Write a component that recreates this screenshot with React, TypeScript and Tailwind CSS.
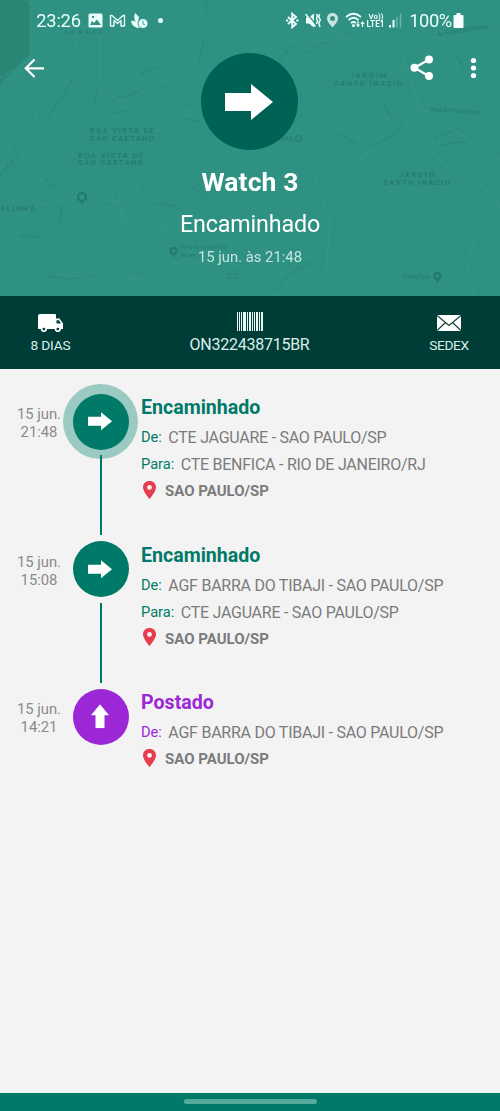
import React from 'react';

type Stop = {
  date: string;
  time: string;
  title: string;
  from: string;
  to?: string;
  kind: 'forwarded' | 'posted';
  current?: boolean;
};

const stops: Stop[] = [
  { date: '15 jun.', time: '21:48', title: 'Encaminhado', from: 'CTE JAGUARE - SAO PAULO/SP', to: 'CTE BENFICA - RIO DE JANEIRO/RJ', kind: 'forwarded', current: true },
  { date: '15 jun.', time: '15:08', title: 'Encaminhado', from: 'AGF BARRA DO TIBAJI - SAO PAULO/SP', to: 'CTE JAGUARE - SAO PAULO/SP', kind: 'forwarded' },
  { date: '15 jun.', time: '14:21', title: 'Postado', from: 'AGF BARRA DO TIBAJI - SAO PAULO/SP', kind: 'posted' },
];

function MapBackdrop() {
  return (
    <svg className="absolute inset-0" width="500" height="296" viewBox="0 0 500 296" fill="none" aria-hidden="true">
      <path d="M0 0H30V54L0 84Z" fill="#2a8575" />
      <g stroke="#3b998a" strokeWidth="1.2" opacity=".65">
        <path d="M0 78 28 61 75 50 76 15M30 0V62L37 82V118L10 145 0 172M100 35V80L130 98 158 80 200 88M76 55 102 95 165 110 200 112M140 0 160 22 205 31 250 20M250 38 310 42 400 35 500 28M409 38 404 62 420 108 500 160M360 130 423 105M430 150 455 176 482 185 500 206 475 234 467 270 475 296" />
        <path d="M0 225 38 205 80 196 120 202 165 225 150 250 127 280 160 276 200 245 250 235M60 150 95 165 118 190 124 236M85 245 130 230 175 225M250 153 300 165 360 162 378 140M0 255 70 276 140 278 180 296M315 175 330 220 326 275M340 250 372 225 398 180M400 220 460 238M70 120 110 132 160 130 205 152M25 0 60 22 95 28M300 0 330 30 380 60 405 70" />
        <path d="M0 190 60 210M50 230 105 270M105 185 100 270M112 196 150 265M90 205 140 212M90 222 145 222M350 110 370 200M390 210 410 260M430 195 440 240M365 243 410 247M210 0 218 50M60 85 100 80" strokeWidth=".8" />
      </g>
      <g stroke="#257f71" strokeWidth="1.5" strokeDasharray="4 1.5 2 1" opacity=".48">
        <path d="M47 118 62 98 72 78M140 74 158 67M118 97 133 95 146 86M94 104 98 87M110 113 130 111M184 119 202 122M199 64 204 39M280 60 291 47M307 53 325 41M384 104 392 120M371 147 390 137 404 123M335 133 357 143M434 138 462 127M440 145 468 141M0 176 20 152M45 179 58 190M60 226 62 206M20 235 46 238M46 276 70 279 96 275M140 189 149 179M154 203 170 205 180 209M188 183 206 198M274 290 290 274 314 260" />
        <path d="M206 14V0M456 54 464 69M227 270H238M227 274H238M227 278H238" />
      </g>
      <g fill="#216f63" className="font-['Roboto',sans-serif]" opacity=".6" fontWeight="600">
        <text x="65" y="33.500" fontSize="6" textLength="38">LORATO</text>
        <text x="90" y="133" fontSize="7.5" textLength="64">BOA VISTA DE</text>
        <text x="90" y="141" fontSize="7.5" textLength="64">SÃO CAETANO</text>
        <text x="78" y="157.500" fontSize="7.5" textLength="65">BOA VISTA DE</text>
        <text x="78" y="165" fontSize="7.5" textLength="65">SÃO CAETANO</text>
        <text x="350" y="78" fontSize="7.5" textLength="36">JARDIM</text>
        <text x="334" y="86" fontSize="7.5" textLength="68">SANTO INACIO</text>
        <text x="399" y="177" fontSize="7.5" textLength="36">JARDIM</text>
        <text x="383" y="185" fontSize="7.5" textLength="67">SANTO INACIO</text>
        <text x="1" y="211" fontSize="7.5" textLength="34">ELINHA</text>
      </g>
      <g fill="#216f63" className="font-['Roboto',sans-serif]" opacity=".5" fontWeight="500">
        <text x="437" y="36" fontSize="6.5" textLength="52" transform="rotate(-8 437 36)">Av. Raimundo Pereira</text>
        <text x="430" y="111" fontSize="6.5" textLength="50" transform="rotate(4 430 111)">Rua do Pano Bom</text>
        <text x="180" y="249" fontSize="5.5" textLength="47">Parque Industrial</text>
        <text x="180" y="257" fontSize="5" textLength="16">Tancredo</text>
        <text x="403" y="279" fontSize="6.5">Carrefour</text>
        <text x="281" y="141" fontSize="6.5">PAX</text>
      </g>
      <g stroke="#227467" strokeWidth="2" opacity=".85">
        <circle cx="82" cy="197" r="4" /><path d="M82 201V204" />
        <circle cx="173.500" cy="251" r="3" /><path d="M173.500 254V257" />
        <circle cx="437.500" cy="276" r="3" /><path d="M437.500 279V282" />
        <path d="M296 136H301V141H296Z" strokeWidth="1" />
      </g>
    </svg>
  );
}

function ArrowIcon({ className }: { className: string }) {
  return (
    <svg className={className} viewBox="0 0 48 36" fill="#fff">
      <path d="M0 9H26V0L48 18L26 36V27H0Z" />
    </svg>
  );
}

function StatusBar() {
  return (
    <div className="relative flex h-[41px] items-center text-white">
      <span className="ml-9 w-[45px] whitespace-nowrap text-[18.3px] leading-5 tracking-[-0.2px] text-[#e9fffb]">23:26</span>
      <svg className="ml-[7px]" width="80" height="20" viewBox="88 11 80 20">
        <path fillRule="evenodd" fill="#e9fffb" d="M90 13.500H101Q102.500 13.500 102.500 15V26Q102.500 27.500 101 27.500H90Q88.500 27.500 88.500 26V15Q88.500 13.500 90 13.500ZM90 25H101L97 19.500 94 23 92 21ZM92 16V18H94V16Z" />
        <path d="M110.500 26V15.500H112L117.500 20.500 123 15.500H124.500V26H121V20.500L117.500 23.500 114 20.500V26Z" fill="none" stroke="#e9fffb" strokeWidth="1.4" strokeLinejoin="round" />
        <path fill="#e9fffb" d="M135 13 139 17 138 22Q142 23 143 28Q132 29 131 21Q134 20 136 22Q133 18 135 13Z" />
        <circle cx="143" cy="23.500" r="5" fill="#e9fffb" stroke="#2e9182" />
        <path d="M143 20.500V24L145 25" fill="none" stroke="#3d9a8b" />
        <circle cx="160.500" cy="20.500" r="2.500" fill="#e9fffb" />
      </svg>
      <svg className="ml-auto" width="118" height="20" viewBox="285 11 118 20" fill="none">
        <path d="M288 17 296 24 292.200 27.200V13.800L296 17 288 24" stroke="#effffd" strokeWidth="1.900" />
        <path d="M286 20.500H288.300M296.300 20.500H298.500" stroke="#effffd" strokeWidth="2" />
        <path d="M306 17.500H309L314 13.500V27.500L309 23.500H306Z" fill="#effffd" />
        <path d="M306.500 13 316.500 25.500" stroke="#2e9182" strokeWidth="1.300" /><path d="M305.500 14 315.500 26.500" stroke="#effffd" strokeWidth="1.400" />
        <path d="M316.500 14 317.500 16 316.500 18.500 317.500 21 316.500 24M319.500 14 318.800 17 320.300 20 318.800 23 320 27" stroke="#effffd" strokeWidth="1.500" />
        <path fillRule="evenodd" fill="#c7e4df" d="M332.500 13C328.800 13 327 15.500 327 18.500C327 22 332.500 27.500 332.500 27.500C332.500 27.500 338 22 338 18.500C338 15.500 336.200 13 332.500 13ZM332.500 16A2.500 2.500 0 1 1 332.500 21A2.500 2.500 0 0 1 332.500 16Z" />
        <path d="M346 17Q353.500 10.500 361 17M348.500 20Q353.500 15.500 358.500 20M351 23Q353.500 21 356 23" stroke="#effffd" strokeWidth="1.700" />
        <circle cx="353.500" cy="25.500" r="1.500" fill="#effffd" />
        <path d="M358 21V26M356.500 24.500 358 26.500 359.500 24.500M362.500 27V22M361 24 362.500 22 364 24" stroke="#effffd" strokeWidth="1.200" />
        <g className="font-['Roboto',sans-serif]" fill="#effffd" fontWeight="700">
          <text x="368.500" y="19" fontSize="8" textLength="15" lengthAdjust="spacingAndGlyphs">Vo))</text>
          <text x="366.500" y="27.300" fontSize="8.500" textLength="18" lengthAdjust="spacingAndGlyphs">LTE1</text>
        </g>
        <path d="M390 25V27.500M393.500 20V27.500" stroke="#effffd" strokeWidth="2" />
        <path d="M396.800 17V27.500M400.500 13.500V27.500" stroke="#6db5aa" strokeWidth="1.500" />
      </svg>
      <span className="ml-[5px] w-[45px] whitespace-nowrap text-[18.3px] tracking-[-0.4px] text-[#e9fffb]">100%</span>
      <svg className="mr-[36px]" width="11" height="16" viewBox="0 0 10 16" fill="#f5fffd"><path d="M3 0H7V2H9Q10 2 10 3V14Q10 15 9 15H1Q0 15 0 14V3Q0 2 1 2H3Z" /></svg>
    </div>
  );
}

function Header() {
  return (
    <header className="relative h-[296px] bg-[#2e9182] text-center text-white">
      <MapBackdrop />
      <StatusBar />
      <div className="relative mt-3 flex h-[98px] items-start">
        <button className="ml-6 mt-[5px] w-[177px]" aria-label="Voltar">
          <svg width="22" height="22" viewBox="0 0 22 22" fill="none" stroke="#fff" strokeWidth="2.200"><path d="M20 10.300H2M10.500 1.500 1.800 10.300 10.500 19" /></svg>
        </button>
        <div className="flex size-[97px] items-center justify-center rounded-full bg-[#006254] pr-[2px] pt-[1px]">
          <ArrowIcon className="h-9 w-12" />
        </div>
        <button className="ml-[112px] mt-0.5" aria-label="Compartilhar">
          <svg width="24" height="26" viewBox="0 0 24 26" fill="#fff"><path d="M19 4.500 4.500 12.800 19 21.200" fill="none" stroke="#fff" strokeWidth="2.200" /><circle cx="19" cy="4.500" r="4" /><circle cx="4.500" cy="12.800" r="4" /><circle cx="19" cy="21" r="4" /></svg>
        </button>
        <button className="ml-[36px] mt-1" aria-label="Mais opções">
          <svg width="7" height="22" viewBox="0 0 6 22" fill="#fff"><circle cx="3" cy="3.500" r="2.600" /><circle cx="3" cy="11" r="2.600" /><circle cx="3" cy="18.500" r="2.600" /></svg>
        </button>
      </div>
      <h1 className="relative mt-[13px] text-[26.5px] font-bold leading-9 tracking-[0.1px]">Watch 3</h1>
      <p className="relative mt-[8px] text-[23.3px] leading-8 tracking-[-0.15px]">Encaminhado</p>
      <p className="relative mt-[5px] text-[14.8px] leading-6 text-[#c5e7e1]">15 jun. às 21:48</p>
    </header>
  );
}

function SummaryBar() {
  return (
    <section className="flex h-[73px] justify-between bg-[#003d36] text-[#d9eeeb]">
      <div className="flex w-[101px] flex-col items-center pt-[18px]">
        <svg width="25" height="19" viewBox="0 0 25 19"><path fillRule="evenodd" fill="#fff" d="M2 0H17Q18 0 18 1V4.500H21.500L25 9.500V15H23A3.200 3.200 0 0 1 16.700 15H9A3.200 3.200 0 0 1 2.700 15H0V2Q0 0 2 0ZM18.500 6.200V9.500H23L21 6.200ZM5.850 13.500A1.500 1.500 0 1 0 5.850 16.500A1.500 1.500 0 1 0 5.850 13.500ZM19.800 13.500A1.500 1.500 0 1 0 19.800 16.500A1.500 1.500 0 1 0 19.800 13.500Z" /><path d="M5.850 12.600A2.400 2.400 0 1 0 5.860 12.600M19.800 12.600A2.400 2.400 0 1 0 19.810 12.600" fill="none" stroke="#fff" strokeWidth="1.400" /></svg>
        <span className="mt-1 text-[13.700px] leading-4 tracking-[-0.2px]">8 DIAS</span>
      </div>
      <div className="flex w-[200px] flex-col items-center pt-4">
        <svg width="26" height="19" viewBox="0 0 26 19" fill="#e9f7f5"><path d="M0 0H1V19H0ZM2 0H3V19H2ZM4 0H5V19H4ZM6 0H9V19H6ZM10 0H11V19H10ZM12 0H14V19H12ZM15 0H16V19H15ZM17 0H18V19H17ZM19 0H21V19H19ZM22 0H23V19H22ZM24 0H26V19H24Z" /></svg>
        <span className="mt-1 text-[16px] leading-5 tracking-[-0.25px]">ON322438715BR</span>
      </div>
      <div className="flex w-[102px] flex-col items-center pt-[19px]">
        <svg width="24" height="16" viewBox="0 0 24 16"><path fill="#fff" d="M0 0H24V16H0Z" /><path d="M0 0.500 12 10.500 24 0.500M0 15.500 8.500 7.500M24 15.500 15.500 7.500" fill="none" stroke="#123f39" strokeWidth="1.200" /></svg>
        <span className="mt-[6px] text-[13.700px] leading-4 tracking-[-0.3px]">SEDEX</span>
      </div>
    </section>
  );
}

function TimelineRow({ stop, last }: { stop: Stop; last: boolean }) {
  const posted = stop.kind === 'posted';
  const accent = posted ? 'text-[#9c27d6]' : 'text-[#007a68]';
  return (
    <li className="flex h-[147.6px]">
      <div className="w-[78px] pt-[21px] text-center text-[14.800px] leading-[18px] text-[#8a8a8a]">
        <div>{stop.date}</div>
        <div>{stop.time}</div>
      </div>
      <div className="ml-[-15px] flex w-[75px] flex-col items-center">
        <div className={'flex size-[75px] shrink-0 items-center justify-center rounded-full ' + (stop.current ? 'bg-[#9bcac3]' : '')}>
          <div className={'flex size-14 items-center justify-center rounded-full ' + (posted ? 'bg-[#9c27d6]' : 'bg-[#007a68]')}>
            <ArrowIcon className={'mr-px h-[18.500px] w-6 ' + (posted ? '-rotate-90' : '')} />
          </div>
        </div>
        {!last && <div className="relative mt-[-4px] h-[80px] w-[2px] shrink-0 bg-[#007a68]" />}
      </div>
      <div className="ml-[3px] pt-[10px] text-[#7b7b7b]">
        <h2 className={'text-[19.600px] font-bold leading-7 ' + accent}>{stop.title}</h2>
        <p className="mt-[2px] flex whitespace-nowrap text-[16px] leading-[27px] tracking-[-0.25px]">
          <span className={'mr-[6.500px] text-[14.600px] tracking-normal ' + accent}>De:</span>{stop.from}
        </p>
        {stop.to && (
          <p className="flex whitespace-nowrap text-[16px] leading-[27px] tracking-[-0.25px]">
            <span className={'mr-[6.500px] text-[14.600px] tracking-normal ' + accent}>Para:</span>{stop.to}
          </p>
        )}
        <p className="flex h-[27px] items-center text-[15px] font-bold">
          <svg className="relative -top-[2px] ml-[2px] mr-[9px]" width="13" height="18" viewBox="0 0 13 18"><path fillRule="evenodd" fill="#e73c4e" d="M6.500 0C2.700 0 0 2.700 0 6.300C0 11 6.500 18 6.500 18C6.500 18 13 11 13 6.300C13 2.700 10.300 0 6.500 0ZM6.500 4A2.400 2.400 0 1 1 6.500 8.800A2.400 2.400 0 0 1 6.500 4Z" /></svg>
          SAO PAULO/SP
        </p>
      </div>
    </li>
  );
}

export default function App() {
  return (
    <div className="flex h-[1111px] w-[500px] flex-col overflow-hidden bg-[#f3f3f3] font-['Roboto',sans-serif]">
      <Header />
      <SummaryBar />
      <main className="flex-1 pt-[15px]">
        <ol>
          {stops.map((stop, i) => <TimelineRow key={stop.time} stop={stop} last={i === stops.length - 1} />)}
        </ol>
      </main>
      <footer className="flex h-[18px] justify-center bg-[#007a68] pt-[6px]">
        <div className="h-[5px] w-[133px] rounded-full bg-[#55aa9d]" />
      </footer>
    </div>
  );
}
